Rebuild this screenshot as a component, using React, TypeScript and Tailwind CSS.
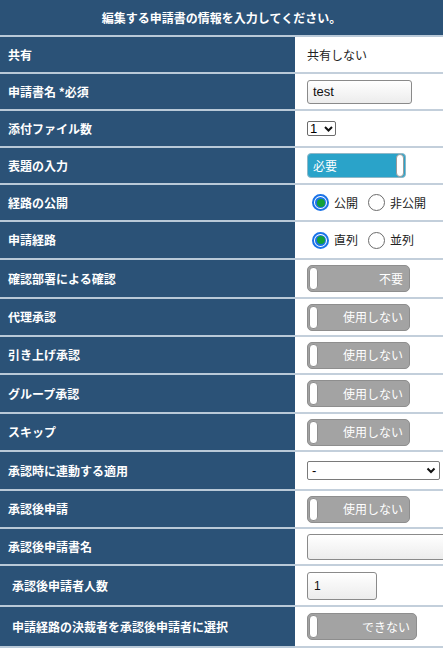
import React from "react";

const font = { fontFamily: '"Noto Sans CJK JP", "Noto Sans", sans-serif' };

function Toggle({ label, on = false, wide = false }: { label: string; on?: boolean; wide?: boolean }) {
  if (on) {
    return (
      <div className="flex items-center h-[25px] w-[99px] rounded-[4px] bg-[#2aa3c9] border border-[#8fb8c8] pl-[5px] pr-[1px]">
        <span className="flex-1 text-[12px] text-white">{label}</span>
        <div className="h-[23px] w-[8px] rounded-[4px] bg-white border border-[#9a9a9a]" />
      </div>
    );
  }
  return (
    <div className={`flex items-center h-[27px] ${wide ? "w-[110px]" : "w-[103px]"} rounded-[5px] bg-[#a3a3a3] border border-[#8e8e8e] pl-[1px] pr-[6px]`}>
      <div className="h-[23px] w-[9px] rounded-[4px] bg-white border border-[#8e8e8e]" />
      <span className="flex-1 text-right text-[12px] text-white">{label}</span>
    </div>
  );
}

function Radio({ label, checked }: { label: string; checked?: boolean }) {
  return (
    <div className="flex items-center gap-[5px]">
      {checked ? (
        <div className="w-[17px] h-[17px] rounded-full border-2 border-[#1a73e8] flex items-center justify-center">
          <div className="w-[11px] h-[11px] rounded-full bg-[#1a73e8] flex items-center justify-center">
            <div className="w-[8px] h-[8px] rounded-full bg-[#12a03a]" />
          </div>
        </div>
      ) : (
        <div className="w-[17px] h-[17px] rounded-full border border-[#6b6b6b] bg-white" />
      )}
      <span className="text-[12px] text-[#222]">{label}</span>
    </div>
  );
}

const rows: { label: string; h: string; indent?: boolean; content: React.ReactNode }[] = [
  { label: "共有", h: "h-[37px]", content: <span className="text-[12px] text-[#222]">共有しない</span> },
  {
    label: "申請書名 *必須",
    h: "h-[37px]",
    content: (
      <div className="w-[105px] h-[24px] rounded-[3px] border border-[#8a8a8a] bg-gradient-to-b from-white to-[#ececec] px-[5px] flex items-center text-[13px] text-[#111]" style={{ fontFamily: '"Liberation Sans", Arial, sans-serif' }}>
        test
      </div>
    ),
  },
  {
    label: "添付ファイル数",
    h: "h-[37px]",
    content: (
      <div className="h-[15px] w-[29px] border border-[#6b6b6b] rounded-[2px] flex items-center justify-between px-[2px] text-[13px] text-black" style={{ fontFamily: '"Liberation Sans", Arial, sans-serif' }}>
        1
        <svg width="9" height="6" viewBox="0 0 9 6"><path d="M1 1l3.5 3.5L8 1" stroke="#111" strokeWidth="2" fill="none" /></svg>
      </div>
    ),
  },
  { label: "表題の入力", h: "h-[37px]", content: <Toggle label="必要" on /> },
  {
    label: "経路の公開",
    h: "h-[37px]",
    content: (
      <div className="flex items-center gap-[10px] pl-[5px]">
        <Radio label="公開" checked />
        <Radio label="非公開" />
      </div>
    ),
  },
  {
    label: "申請経路",
    h: "h-[38px]",
    content: (
      <div className="flex items-center gap-[10px] pl-[5px]">
        <Radio label="直列" checked />
        <Radio label="並列" />
      </div>
    ),
  },
  { label: "確認部署による確認", h: "h-[39px]", content: <Toggle label="不要" /> },
  { label: "代理承認", h: "h-[38px]", content: <Toggle label="使用しない" /> },
  { label: "引き上げ承認", h: "h-[38px]", content: <Toggle label="使用しない" /> },
  { label: "グループ承認", h: "h-[39px]", content: <Toggle label="使用しない" /> },
  { label: "スキップ", h: "h-[38px]", content: <Toggle label="使用しない" /> },
  {
    label: "承認時に連動する適用",
    h: "h-[39px]",
    content: (
      <div className="w-[133px] h-[19px] border border-[#7a7a7a] rounded-[2px] flex items-center justify-between pl-[4px] pr-[3px] text-[13px] text-black" style={{ fontFamily: '"Liberation Sans", Arial, sans-serif' }}>
        -
        <svg width="10" height="7" viewBox="0 0 10 7"><path d="M1.5 1.5l3.5 3.5 3.5-3.5" stroke="#111" strokeWidth="2" fill="none" /></svg>
      </div>
    ),
  },
  { label: "承認後申請", h: "h-[38px]", content: <Toggle label="使用しない" /> },
  {
    label: "承認後申請書名",
    h: "h-[37px]",
    content: <div className="w-[160px] shrink-0 h-[26px] rounded-[3px] border border-[#8a8a8a] bg-gradient-to-b from-white to-[#ececec]" />,
  },
  {
    label: "承認後申請者人数",
    h: "h-[41px]",
    indent: true,
    content: (
      <div className="w-[70px] h-[28px] rounded-[3px] border border-[#8a8a8a] bg-gradient-to-b from-white to-[#ececec] px-[6px] flex items-center text-[12px] text-[#111]" style={{ fontFamily: '"Liberation Sans", Arial, sans-serif' }}>
        1
      </div>
    ),
  },
  { label: "申請経路の決裁者を承認後申請者に選択", h: "h-[41px]", indent: true, content: <Toggle label="できない" wide /> },
];

export default function App() {
  return (
    <div className="w-[443px] h-[657px] bg-white overflow-hidden" style={font}>
      <div className="h-[37px] bg-[#2b5277] border-b-2 border-[#b9c9d8] flex items-center justify-center">
        <span className="text-[12px] font-bold text-white">編集する申請書の情報を入力してください。</span>
      </div>
      {rows.map((r) => (
        <div key={r.label} className={`flex ${r.h}`}>
          <div className={`w-[295px] shrink-0 bg-[#2b5277] border-b-2 border-[#b9c9d8] flex items-center ${r.indent ? "pl-[12px]" : "pl-[8px]"}`}>
            <span className="text-[12px] font-bold text-white">{r.label}</span>
          </div>
          <div className="flex-1 min-w-0 bg-white border-b-2 border-[#c3cfdb] flex items-center pl-[12px] overflow-hidden">
            {r.content}
          </div>
        </div>
      ))}
    </div>
  );
}
